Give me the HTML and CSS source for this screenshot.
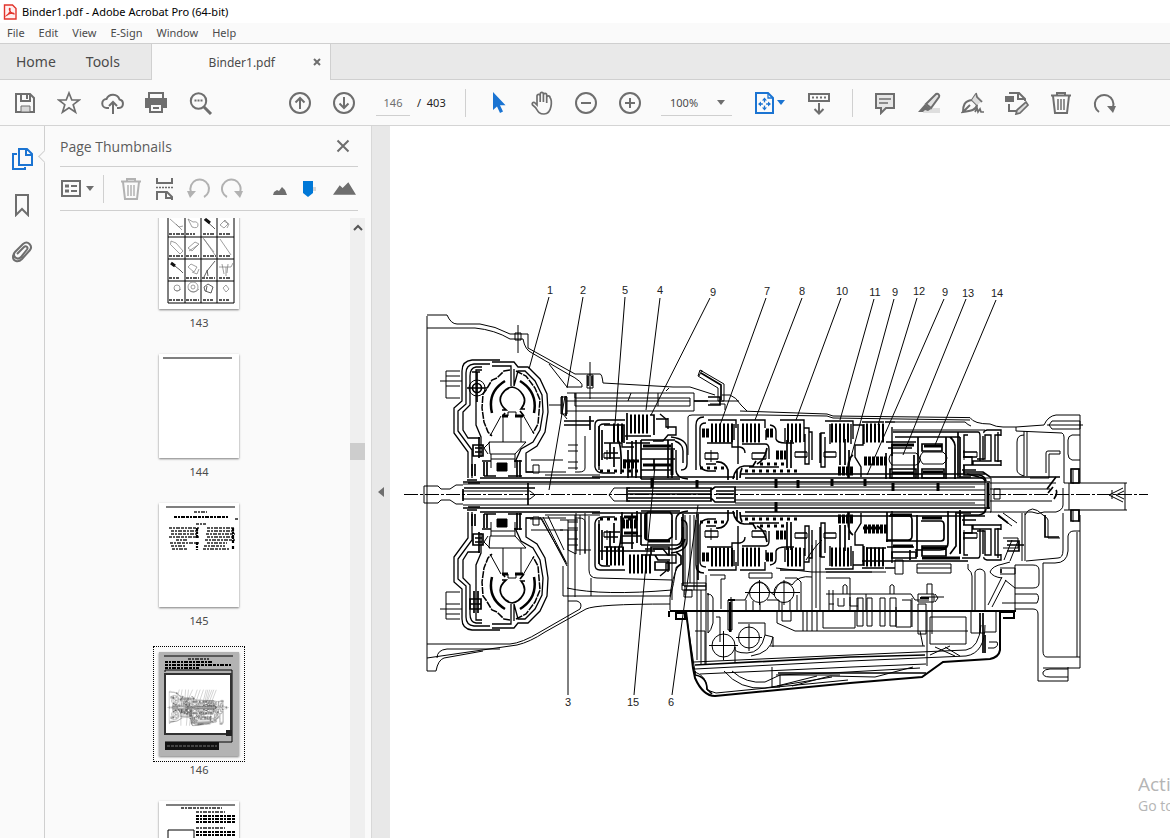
FILE: index.html
```html
<!DOCTYPE html>
<html lang="en">
<head>
    <meta charset="UTF-8">
    <meta name="viewport" content="width=device-width, initial-scale=1.0">
    <title>Binder1.pdf - Adobe Acrobat Pro (64-bit)</title>
    <link rel="stylesheet" href="styles.css">
</head>
<body>

<header class="title-bar">
    <svg class="app-icon" viewBox="0 0 14 16"><path d="M1.500 1h8l3.500 3.500V15H1.500z" fill="#fff0f0" stroke="#e2332b" stroke-width="1.400"/><path d="M3.500 11.500c2.500-1 4-4.500 3.500-7-.6-.6-.9.300-.5 1.500.5 2 2 3.500 4.500 4 .3-1-1.500-1-3.500-.6-1.500.3-3 .8-4 2.100z" fill="none" stroke="#e2332b" stroke-width="1.200"/></svg>
    <span>Binder1.pdf - Adobe Acrobat Pro (64-bit)</span>
</header>

<nav class="menu-bar">
    <a href="#">File</a>
    <a href="#">Edit</a>
    <a href="#">View</a>
    <a href="#">E-Sign</a>
    <a href="#">Window</a>
    <a href="#">Help</a>
</nav>

<div class="tab-bar">
    <div class="fixed-tabs">
        <a href="#">Home</a>
        <a href="#">Tools</a>
    </div>
    <div class="doc-tab">
        <span>Binder1.pdf</span>
        <button type="button" class="tab-close" aria-label="Close tab"><svg viewBox="0 0 8 8"><path d="M1 1l6 6M7 1L1 7" stroke-width="2"/></svg></button>
    </div>
</div>

<!-- Main toolbar -->
<div class="toolbar">
    <button type="button" class="tool" aria-label="Save"><svg viewBox="0 0 24 24"><path d="M3 3h14l4 4v14H3zM8 3v7h9V4M14 4v4" /><path d="M8 15h9v6H8z" fill="#d8d8d8" stroke-width="1"/></svg></button>
    <button type="button" class="tool" aria-label="Star"><svg viewBox="0 0 24 24"><path d="M12 2l2.800 7h7.400l-6 4.700 2.300 7.500L12 16.800l-6.500 4.400 2.300-7.500-6-4.700h7.400z" stroke-width="1.700"/></svg></button>
    <button type="button" class="tool" aria-label="Upload"><svg viewBox="0 0 24 24"><path d="M8 17H6a4.500 4.500 0 0 1-.5-9A7 7 0 0 1 18.500 8.500 4.300 4.300 0 0 1 18 17h-2"/><path d="M12 23V11M8 15l4-4 4 4"/></svg></button>
    <button type="button" class="tool" aria-label="Print"><svg viewBox="0 0 24 24"><path d="M4 2h14v6H4z"/><path d="M0 7h22v10H0z" class="solid" stroke="none"/><path d="M5 13h12v8H5z" fill="#fafafa"/><path d="M8 16h6v2H8z" class="solid" stroke="none"/></svg></button>
    <button type="button" class="tool" aria-label="Find"><svg viewBox="0 0 24 24"><circle cx="9.500" cy="10" r="7.700"/><path d="M15 16l7 7" stroke-width="3"/><path d="M5.500 9.500h8" stroke-dasharray="2 1"/></svg></button>

    <button type="button" class="tool page-up" aria-label="Previous page"><svg viewBox="0 0 24 24"><circle cx="12" cy="12" r="10"/><path d="M12 18V7M7.500 11.500L12 7l4.500 4.500"/></svg></button>
    <button type="button" class="tool" aria-label="Next page"><svg viewBox="0 0 24 24"><circle cx="12" cy="12" r="10"/><path d="M12 6v11M7.500 12.500L12 17l4.500-4.500"/></svg></button>
    <input class="page-input" type="text" value="146" aria-label="Page number">
    <span class="page-count">/&nbsp; 403</span>
    <span class="separator"></span>

    <button type="button" class="tool blue" aria-label="Select"><svg viewBox="0 0 24 24"><path d="M7 1v18l4-3.500 3 6.500 3-1.500-3-6.300h5.500z" class="solid" stroke="none"/></svg></button>
    <button type="button" class="tool" aria-label="Hand"><svg viewBox="0 0 24 24"><path d="M7 14V5a1.600 1.600 0 0 1 3.200 0v6V3a1.600 1.600 0 0 1 3.200 0v8-7a1.600 1.600 0 0 1 3.300 0v8-5.500a1.600 1.600 0 0 1 3.300 0C22 9 22.500 23 14 23c-5 0-6-2.500-8.500-6.500L2.500 14c-1-2 .5-3 2-2.500z" stroke-width="1.700"/></svg></button>
    <button type="button" class="tool" aria-label="Zoom out"><svg viewBox="0 0 24 24"><circle cx="12" cy="12" r="10"/><path d="M7 12h10"/></svg></button>
    <button type="button" class="tool" aria-label="Zoom in"><svg viewBox="0 0 24 24"><circle cx="12" cy="12" r="10"/><path d="M7 12h10M12 7v10"/></svg></button>
    <div class="zoom-box">
        <select aria-label="Zoom level"><option>100%</option></select>
        <svg class="caret" viewBox="0 0 8 5"><path d="M0 0h8L4 5z"/></svg>
    </div>

    <button type="button" class="tool fit blue" aria-label="Fit page"><svg viewBox="0 0 24 24"><path d="M2 2h12l5 5v15H2z"/><path d="M14 2v5h5M10.500 8v10M5.500 13h10" stroke-width="1.300"/><path d="M8 9.500l2.500-3 2.500 3zM8 16.500l2.500 3 2.500-3zM7 10.500l-3 2.500 3 2.500zM14 10.500l3 2.500-3 2.500z" class="solid" stroke="none"/><circle cx="10.500" cy="13" r="1.800" fill="#fafafa" stroke="none"/></svg><svg class="caret" viewBox="0 0 8 5"><path d="M0 0h8L4 5z"/></svg></button>
    <button type="button" class="tool" aria-label="Scrolling mode"><svg viewBox="0 0 24 24"><path d="M2 3h20v7H2z"/><path d="M5 6.500h14" stroke-dasharray="2 2"/><path d="M12 12v10M7.500 18l4.500 4.500 4.500-4.500"/></svg></button>
    <span class="separator"></span>

    <button type="button" class="tool" aria-label="Comment"><svg viewBox="0 0 24 24"><path d="M3 3h18v14h-8l-5 5v-5H3z" fill="#e6e6e6"/><path d="M6 8h12M6 12h9" stroke-width="1.300"/></svg></button>
    <button type="button" class="tool" aria-label="Highlight"><svg viewBox="0 0 24 24"><path d="M7 17h16v5H6z" fill="#dedede" stroke="none"/><path d="M19 3c2-1 4 1 3 3L14 17l-5-4z" fill="#e2e2e2"/><path d="M8 13l6 5-3 2-3-1-2 2H1z" class="solid" stroke="none"/></svg></button>
    <button type="button" class="tool" aria-label="Sign"><svg viewBox="0 0 24 24"><path d="M2 21c0-6 1-11 9-12l5 5c-1 5-6 6-14 7l7-7M11 9l4-6"/><path d="M15 3l7 7-6 4-5-5z" fill="#ddd" stroke="none"/><path d="M15 2l1 4 5 5M14 21l2-4 1 4 2-3 1 3h3" stroke-width="1.700"/></svg></button>
    <button type="button" class="tool" aria-label="Edit PDF"><svg viewBox="0 0 24 24"><path d="M4 2h10l6 6v2M13 2v6h6M4 13v7h7"/><path d="M0 5h9v6H0z" class="solid" stroke="none"/><path d="M11 23l1-4 9-8 2 3-8 8z" fill="#ddd" stroke-width="1.700"/></svg></button>
    <button type="button" class="tool" aria-label="Delete"><svg viewBox="0 0 24 24"><path d="M4 5l2 17h12l2-17M2 4.500h20M8 4V2h8v2"/><path d="M9 8v11M12 8v11M15 8v11" stroke-width="1.500"/></svg></button>
    <button type="button" class="tool" aria-label="Rotate"><svg viewBox="0 0 24 24"><path d="M6 21a9.300 9.300 0 1 1 14-5"/><path d="M14 15h9l-3 7z" class="solid" stroke="none"/></svg></button>
</div>

<main class="workspace">
    <nav class="rail">
        <button type="button" class="blue" aria-label="Page thumbnails"><svg viewBox="0 0 24 24"><path d="M9 2h8l5 5v11H9zM16 2v6h6M7 7H3v15h12v-2"/></svg></button>
        <button type="button" aria-label="Bookmarks"><svg viewBox="0 0 24 24"><path d="M6 2h12v20l-6-6-6 6z"/></svg></button>
        <button type="button" aria-label="Attachments"><svg viewBox="0 0 24 24"><path d="M7 15l7-7c2-2 4.500.5 3 2.500L11 18c-4 4-9-1-6-5l8-8c5-4 10 2 7 6l-8 9c-4 4-9 2-9-2 0-2 1-4 2-5"/></svg></button>
        <span class="rail-notch"></span>
    </nav>

    <aside class="panel">
        <div class="panel-head">
            <h2>Page Thumbnails</h2>
            <button type="button" aria-label="Close panel"><svg viewBox="0 0 14 14"><path d="M1.500 1.500l11 11M12.500 1.500l-11 11"/></svg></button>
        </div>
        <div class="panel-tools">
            <button type="button" class="options" aria-label="Options"><svg viewBox="0 0 24 24"><path d="M2 4h18v15H2z"/><path d="M5 9h4M5 14h4" stroke-width="3"/><path d="M11 9h6M11 14h6"/></svg><svg class="caret" viewBox="0 0 8 5"><path d="M0 0h8L4 5z"/></svg></button>
            <span class="separator"></span>
            <button type="button" class="pale" aria-label="Delete pages"><svg viewBox="0 0 24 24"><path d="M4 5l2 17h12l2-17M2 4.500h20M8 4V2h8v2"/><path d="M9 8v11M12 8v11M15 8v11" stroke-width="1.500"/></svg></button>
            <button type="button" aria-label="Insert pages"><svg viewBox="0 0 24 24"><path d="M4 1v5h15V1M4 23v-8h10l5 5v3M13 15v6h6"/><path d="M3 10.500h17" stroke-dasharray="2 1" stroke-width="1.500"/></svg></button>
            <button type="button" class="pale" aria-label="Rotate left"><svg viewBox="0 0 24 24"><path d="M17 20a9.300 9.300 0 1 0-13-5"/><path d="M9 14H0l3 7z" class="solid" stroke="none"/></svg></button>
            <button type="button" class="pale" aria-label="Rotate right"><svg viewBox="0 0 24 24"><path d="M6 20a9.300 9.300 0 1 1 13-5"/><path d="M13 14h9l-3 7z" class="solid" stroke="none"/></svg></button>
            <div class="size-slider">
                <svg class="hill-small" viewBox="0 0 14 8"><path d="M0 8l1-3 3-2 2 1 3-4 3 3 2 5z"/></svg>
                <svg class="slider-knob" viewBox="0 0 14 16"><path d="M9 6h4v4H9z" fill="#d6d6d6"/><path d="M0 0h10v12l-5 4-5-4z" fill="#0078d7"/></svg>
                <svg class="hill-large" viewBox="0 0 24 13"><path d="M0 13L7 3l3 3 6-6 8 13z"/></svg>
            </div>
        </div>
        <div class="panel-body">
            <ul class="thumbs">
                <li>
                    <svg class="page" viewBox="0 0 80 104">
                        <path d="M9 10H75V98H9zM26 10V98M42 10V98M58 10V98M9 32H75M9 54H75M9 76H75" class="ink"/>
                        <path d="M10 29H25M27 29H36M44 29H56M60 29H72M10 51H24M27 51H40M44 51H57M60 51H72M10 73H20M27 73H40M43 73H56M60 73H72M10 95H24M27 95H40M44 95H54M60 95H70" class="tiny-text"/>
                        <path d="M11 14l9 8 4-1M17 19l6 6M29 14l4 8q6 2 6-2t-5-3zM12 36q-2 4 2 6l7 7 3-3-7-8-5-2M29 43l7-6 4 2-7 7zM30 46l9-6M45 34l11 16M44 33l11 14M61 34l11 16M29 62l6 5 3-5-6-3zM33 67l5 2 2-5M60 62h12l2-4M63 59l2 10M67 62v9M69 59l-1 9M61 20l5-5 3 4-4 4zM65 16l5 3-2 4M64 83l3-3 3 4-3 3z" class="sketch"/>
                        <circle cx="18" cy="83" r="3" class="sketch"/><path d="M15 84q3 4 7 0M29 84q6 6 11 0" class="sketch"/><circle cx="34" cy="82" r="5" class="sketch"/><circle cx="34" cy="82" r="2" class="sketch"/>
                        <path d="M45 72l3-6 8-10M49 71l-1-6M45 82l4-3 5 3-2 6-6-2zM48 81l-1 5M45 14l9 8 2 2M12 58l9 7 3 3" class="sketch-dark"/>
                        <path d="M46 14l5 4M12 58l4 3" class="dash-bold"/>
                    </svg>
                    <span>143</span>
                </li>
                <li>
                    <svg class="page" viewBox="0 0 80 104"><path d="M4 4H73" class="rule"/></svg>
                    <span>144</span>
                </li>
                <li>
                    <svg class="page" viewBox="0 0 80 104">
                        <path d="M7 4H76" class="rule"/>
                        <path d="M35 9H48M37 21H47M76 16H79" class="tiny-text"/><path d="M15 14H70" class="tiny-text heavy"/>
                        <path d="M10 25H40M12 28H40M12 31H38M10 34H40M17 37H28M11 40H40M12 43H26M13 46H28M48 25H76M48 28H76M47 31H76M48 34H74M46 37H76M48 40H68M45 43H66M44 46H70" class="tiny-text"/>
                        <path d="M38 25V35M38 39V47M74 25V40M74 43V47" class="tiny-text heavy"/>
                    </svg>
                    <span>145</span>
                </li>
                <li class="selected">
                    <svg class="page" viewBox="0 0 80 104">
                        <path d="M0 0H80V104H0z" fill="#b3b3b3"/>
                        <path d="M5 4H74M6 18V20M6 18H73V90H6" class="ink"/>
                        <path d="M29 7H50" class="tiny-text"/><path d="M6 10H54M6 13H73M6 16H40" class="tiny-text heavy"/>
                        <path d="M6 22H72V82H6z" fill="#fff" stroke="#333" stroke-width="2"/>
                        <path d="M67 78h6v6h-6z" fill="#222"/>
                        <svg x="8" y="36" width="62" height="40" viewBox="400 280 750 440" preserveAspectRatio="none"><use href="#cutaway" stroke-width="2"/></svg>
                        <path d="M6 90H60V98H6z" fill="#111"/><path d="M8 94H58" stroke="#777" stroke-dasharray="3 1"/>
                    </svg>
                    <span>146</span>
                </li>
                <li>
                    <svg class="page" viewBox="0 0 80 104">
                        <path d="M7 4H76" class="rule"/>
                        <path d="M22 7H63M37 11H66M37 27H66" class="tiny-text"/>
                        <path d="M37 15H76M37 18H76M37 21H76M37 31H76M37 34H76" class="tiny-text heavy"/>
                        <path d="M9 29H35V60H9z" class="ink"/>
                    </svg>
                </li>
            </ul>
            <div class="scrollbar">
                <svg class="scroll-up" viewBox="0 0 10 7"><path d="M1 6l4-4 4 4"/></svg>
                <span class="scroll-thumb"></span>
            </div>
        </div>
    </aside>

    <button type="button" class="splitter" aria-label="Collapse panel"><svg viewBox="0 0 6 10"><path d="M6 0v10L0 5z"/></svg></button>

    <!-- Document page with the cutaway drawing -->
    <section class="document">
        <svg class="drawing" viewBox="390 126 780 712">
            <g id="cutaway" class="lines">
                <!-- bell housing -->
                <path d="M427 316V671H436Q438 660 444 658L483 651M427 644H510Q522 643 540 632L580 609Q583 603 577 601H568M427 658L517 645Q530 642 545 632L586 609Q596 604 670 604M437 658Q437 650 447 649H500"/>
                <path d="M427 315H447Q451 324 457 324H480Q495 326 510 334H528V348L575 374H600Q602 374 603 383L673 387H690L715 395M427 328H475Q495 330 510 339H523Q525 350 532 353L568 374Q584 382 582 387H567L549 364M515 333v7h6v-7zM518 325v28" />
                <path d="M567 393H694V411H567M575 393V398H690V406H575zM576 393V470M561 397h6v17h-6zM563 414l4 5M549 405h12M587 375h6v13h-6zM590 362v37M631 393l-3 8M658 393v13M666 391l3-3M567 401H690" />
                <path d="M562 396v18M566 396v20M564 421h30M564 425h26M590 416v14M588 376v10M592 376v10" class="bold"/>
                <path d="M700 370l24 14v17h-6V388l-20-12zM699 376l3-6M694 401h45M722 395h8q6 2 11 10l6 6M710 404h15v6"/>
                <path d="M701 373l20 12v15M694 401h14" class="bold"/><path d="M708 397h12v8h-12" class="bold"/>
                <!-- top of the case -->
                <path d="M688 455V417Q688 415 692 415H760L827 416 833 418 970 420M740 411L827 414 833 416 970 417.600Q974 424 990 424Q996 427 1003 427H1016L1044 425Q1048 416 1056 415H1080V483M893 430H985M895 422H965q3 3 6 4" />
                <path d="M1052 421h28v8h-28l-3-4zM1047 425h36M1080 435h-8q-4 1-4 5v14q0 5 4 6h8M1016 427v4l46 2q2 1 2 4v46M1024 431v45M1027 431v45M1024 435q-7 0-7 7v28q0 4 7 6M1046 473V453q0-2 2-2h12v3h-11v24h-19M1071 469h9M1073 470v14"/>
                <path d="M967 474l12 3q5 1 6 4M963 472h20l7 5h70" class="bold"/>

                <!-- torque converter, upper half -->
                <g id="converter">
                    <path d="M500 360H472Q462 361 462 371V401L454 408V433L468 452V478M490 364H474Q466 365 466 373V404L458 411V431L472 450V478M482 367H476Q470 368 470 376V405L463 412V430L468 438H480M482 370h-6v30M476 400v25l5 12v20" stroke-width="1.300"/>
                    <path d="M492 362H514L518 367H528L540 379 547 394 548 412 545 432 537 446 526 453V472H533M492 366H511V386M514 369V386L518 371H525L535 381 542 395 543 412 540 430 533 442 521 449 515 462" stroke-width="1.300"/>
                    <path d="M510 370l-6 1-7 7-5 2-6 10-3 4-1 14 2 14 4 10 4 4M516 371l10 5 9 12 5 12-2 24-5 9" stroke-dasharray="7 1" stroke-width="1.500"/>
                    <path d="M505 381Q487 392 492 413M520 381Q538 392 534 413" stroke-width="2.500"/>
                    <path d="M502 410h4q-9-8-4-16 4-6 10-7 7 1 11 8 4 7-2 14h4M505 413l-2 3M520 411l4 5" stroke-width="1.700"/>
                    <path d="M508 416v-4h8v4M503 416V442M521 416V442M501 416L490 436M523 415L534 434M489 442H526L515 454H490zM491 454V468M515 454V468M491 459H515M488 454l-4-6 6-6"/>
                    <path d="M497 463h10v8h-10z" class="fill"/>
                    <path d="M484 462v14M487 462v14M517 460v17M520 460v17M472 464v12M475 464v12M482 461h9M514 461h8M484 476h12M508 476h14" class="bold"/>
                    <path d="M502 416h6M515 416h8" class="heavy"/>
                    <path d="M473 445h10v11h-10zM479 437v21M475 448h7M475 452h7" class="bold"/>
                    <path d="M460 371H446V398H460M446 376H460M446 386H460M440 381H462"/>
                    <path d="M531 460H563M531 473H531zM533 465h6v8h-6z M526 472h40M545 475h55" />
                    <path d="M480 478H600M468 483H480M467 480h10" class="bold"/>
                </g>
                <use href="#converter" transform="matrix(1 0 0 -1 0 990)"/>
                <circle cx="477" cy="388" r="8"/><circle cx="477" cy="388" r="4.500" class="bold"/><path d="M467 388h20M477 372v30M472 372h8M477 384v8" class="bold"/>
                <path d="M474 591v22M478 591v22M470 599h11v10h-11zM470 604h11" class="bold"/>

                <!-- clutch packs, upper half -->
                <g id="clutches">
                    <path d="M711 433h22M742 433h20M787 433h15M831 433h20M866 433h20" class="plates"/>
                    <path d="M595 467V425Q595 420 600 420H625M599 470V428Q599 424 604 424H610M595 467q1 6 8 6h12M604 443h18v4h12M660 414l6 5v8h10v8h-8l-5 6h-10M668 418v11" stroke-width="1.400"/>
                    <path d="M671 437q16 2 16 12v15q0 6-6 6M675 441q8 3 8 10v12M676 450v20q0 8 12 9" stroke-width="1.400"/>
                    <path d="M708 420H736V428M696 470V425q0-8 8-8M700 465V428q0-5 6-5M700 465q1 5 8 6h8M740 420H765V428M707 443h25v4h8q5 1 5 6M742 444h23q4 0 4 5v10M770 425q6 1 6 6v8q1 4 10 4h8M780 420h24v22M804 428h5v36h-4v-30M809 432h3v28M820 433v30M825 421h28v18M825 433h-4v34h4v-30M853 425h10v20h-8v12l6 10v10M862 422h22M892 427v52M885 422h10M734 424v16M738 424v40M766 430v10M785 428v14M830 424v20M851 424v20M864 424v20" stroke-width="1.400"/>
                    <path d="M705 453h13M705 459h13M752 453h14M752 459h14M795 452h12M795 457h12M824 452h12M824 457h12M963 452h14M963 457h14M604 453h14M604 458h16" class="bold"/>
                    <path d="M705 453v6M718 453v6M711 450v12M752 453v6M766 453v6M795 452v5M807 452v5M824 452v5M836 452v5M964 450v10M977 452v5M604 453v5M607 450v10"/>
                    <path d="M702 433h8M766 433h8M776 455h10M864 461h24M838 471h16" class="heavy dense"/>
                    <path d="M733 479q2-12 11-13h9l3-5M716 462q9-1 12 8v10M737 470v10M742 468q-2 4-2 10M706 464h10M749 467h30M787 440v28M791 440v28M767 448q-2 12-10 16" class="bold"/>
                    <path d="M962 432h16q2 0 2 4v25M968 435h-4v22h8v8h-9M984 433q-1-2 3-3h14v5h-6v26h6v4H973v-4h18v-26h-6v24h-8M998 432v30M983 436v24M1001 430v6M1001 460v6" stroke-width="1.400"/>
                    <path d="M960 437v40M964 465v10h15q6 1 7 6M962 470h14M957 477h14M840 439v26M845 439v26M853 455q-5 3-5 14v9M849 450v28" class="bold"/>
                    <path d="M585 436v32q0 4-6 4h-4M568 445h10M568 451h10M568 462h10M568 468h10" />
                    <path d="M592 477H735M740 474H985M745 478H985M641 479H680" class="bold"/><path d="M600 471H640M745 471H800M700 468H728M760 464H785" class="tiny-ticks"/>
                    <path d="M599 426v40M602 430v30M610 443v16M614 447v20M618 440q4 6 3 34M632 441v36" class="bold"/>
                </g>
                <use href="#clutches" transform="matrix(1 0 0 -1 0 990)"/>

                <!-- planetary gears, upper half -->
                <path d="M630 424h20M613 433h12" class="plates"/>
                <path d="M627 413V440M650 415h4v20M656 419h12M604 425h20v18M626 443h24M625 436h26" class="bold"/>
                <path d="M641 440h34M641 449h34M641 459h34M641 470h30M641 440v39M672 443v35M668 440v38M654 459v11M628 450v28M636 440v38" class="bold"/>
                <path d="M643 446h28M643 465h28M623 461h16M672 450v25" class="heavy"/>
                <path d="M623 464h14" class="heavy dense"/>
                <path d="M893 432H962M895 437H960M886 442H916M888 448H912M886 453v26M892 444v12M918 437v42M914 455v22M922 444h20v7h-20zM946 437v42M950 437q6 5 5 12v30M958 432v44M890 469h26v9h-26zM922 469h22v9h-22z" class="bold"/>
                <path d="M892 445h22M924 446h18M892 473h22M923 472h20" class="heavy"/>
                <path d="M892 453h24q4 3 4 7t-4 5h-24q-3-3-3-6t3-6zM923 452h20q4 3 4 6t-4 6h-20q-3-3-3-6t3-6z"/>

                <!-- planetary gears, lower half -->
                <path d="M629 564h22M606 556h18" class="plates"/>
                <path d="M637 511v32M641 513v32M648 512h22l2 3v22l-4 3h-20q-3 0-3-3v-22zM641 545h36q5-1 5-8v-20M645 549h28q9 0 12-10M651 547h18v8h-18zM622 536h20M600 551h55M641 555h14l3 5h12M655 562h14v8h-14zM676 552l5 4v8l-5 4M622 512v32" class="bold"/>
                <path d="M648 541h22M624 517h14M624 533h14M646 513v26" class="heavy"/>
                <path d="M622 524h15" class="heavy dense"/>
                <path d="M887 512v30M889 516h20q3 0 3 4v16q0 4-4 4h-22M917 515v42M921 521h20q3 0 3 4v13q0 3-3 3h-55M948 511v32q0 7-8 7h-25M956 512v34l-6 8M960 510v44M887 547h27M892 552h24v6h-24zM922 546h24v10h-24zM910 550v10M862 561h106M866 548h20" class="bold"/>
                <path d="M890 515h22M922 518h20M893 546h20M922 548h24M922 558h38M863 528h20" class="heavy"/>

                <!-- shafts -->
                <path d="M424 486h14l3 3h9l6-4h7M424 503h14l3-3h9l6 4h7M424 486v17" />
                <path d="M463 484H985M463 505H985M463 491H530l5 4-5 4H463zM609 495l5-7h16M609 495l5 6h16M735 490H985M735 500H985M735 487H975M735 503H975M985 478h6v34h-6zM994 489h6v10h-6z"/>
                <path d="M464 488H535M528 483v22M463 482H990M463 508H990M627 488h84v13h-84zM711 490l4-3h20v15h-20l-4-4zM463 489v12" class="bold"/>
                <path d="M628 491H711M628 494H711M628 498H711M716 491h18M716 494h18M716 498h18" class="bold"/>
                <path d="M697 480v8M776 479v9M832 479v7M865 479v7M893 483v8M938 483v8M776 502v10M798 480v8M652 478v10M988 483v26" stroke-width="3"/>
                <path d="M404 494.500H1148" stroke-dasharray="14 2 3 2"/>
                <path d="M990 483h66M990 512h42q6 3 12 0h12q7-2 7-7v-17M990 489h60M990 501h62M1064 483H1127M1064 510H1127M1069 483v27M1125 483v27M1123 488l-14 7 14 7M1124 491l-8 4 8 4M1112 490v9M1073 510v12M1079 510v12"/>
                <path d="M1071 469h8v14h-8zM1071 510h8v11h-8zM1048 493l5-6M1047 489l9-12M1056 490q2 3-2 9" class="bold"/>

                <!-- case below the shafts -->
                <path d="M530 519h12L567 566M543 517L566 562M548 516L564 550M540 517L567 564M568 520v30l8 4V513M575 515v82M589 516v54q0 8 8 8l75 2M576 530v20h15M567 588q35 8 105 2M591 578v18M563 566v30h107M560 520h18M560 530h18M580 515v40M585 513v40" />
                <path d="M672 520v80M685 515v80M690 515v68M694 515v75M682 583h24v7h-24zM684 590h8v7h-8zM670 596q2-18 8-30M676 568q-2 16-6 30v12"/>
                <path d="M683 514v72M698 514v66M684 586h22" class="bold"/>
                <path d="M710 575h15v4h-4v30M706 575v90M701 590v75M697 565v95M749 573h23v5h-23zM735 600h10l4-8q10-20 20-1l5 4q5-20 18-10 6-10 20-8M785 578h12l4 4v28M746 600v10M753 601v9M760 603v7M767 600h12v10M782 602v8M790 600v10M797 595v15M826 578h24v32M812 545v65M816 540v68M820 545v65M806 560q10-15 16-20M776 568l36 4h60M826 572h60"/>
                <circle cx="759.500" cy="592.500" r="10"/><circle cx="784" cy="592.500" r="10"/><circle cx="723.500" cy="645.500" r="11.500"/><circle cx="749" cy="637.500" r="10.500"/>
                <path d="M745 592.500h55M759.500 580v25M784 580v25M709 645.500h29M723.500 631v29M736 637.500h26M749 624v27M708 593v40q3-2 5-10v-25q-2-5-5-3zM716 617h4v25M728 600h4v30h-4zM731 597v35"/>
                <path d="M777 611v12l18 8h125l3 15M782 611v10h9v-10M823 611v17h32v-17M829 590v20M833 590v20M826 594h85l4 6h14M858 598v12M866 594v16M843 594v-8q2-3 4 0v8M890 594v-8q2-3 4 0v8M857 598h6v28h-6zM867 598h5v28h-5zM880 598h5v28h-5zM890 598h6v28h-6zM902 600h9v27h-15v-20M912 598v29M918 604h8v30h-8zM803 611v20M807 611v20M812 611v20M817 611v20"/>
                <path d="M829 604h5M838 598v8h6v-8M850 597v9h8M921 597h23M927 594v-10h5v50M918 594h16v8h-16zM935 594l3 4-3 4M930 617h36v27h-36zM920 631h48M927 611v55M695 631h10v33M738 623h27v12l8 2v10M765 635q-4 18-18 18t-12-6v16M773 637q-2 16-22 19M770 646h155M917 564h34v9h-34zM917 568h34M895 560h8v14h-8z"/>
                <path d="M670 611H1016M669 611v6M676 613h9v6h-9zM686 611L693 668 695 678Q703 696 715 696L850 683 922 677 943 662 990 659Q999 657 1000 650V612H1014V618H1003M920 598h9M728 600h7M730 602v30" class="outline"/>
                <path d="M686 613L695 672Q707 676 707 690L716 693 848 680M694 662L850 655 966 650Q979 648 981 625M695 669L850 661 966 656Q985 653 985 625M700 674L852 667 926 664M776 675L830 673 920 668M777 686l40-10M772 667v20h8v-12h60M724 671Q740 690 765 688L832 677M732 671Q746 684 765 682L780 675M792 686l38-10 45 1 38-10M930 655l20-9M935 647l20 9M945 647l15 9M971 611v22h13M996 612v20h-12M988 648h6q5-2 3-6h-8M975 633"/>
                <path d="M695 665L850 657 925 655M778 673H926M695 671v4q12 2 12 14l5 5" class="bold"/>
                <path d="M968 564v5q4 3 4 7v34M975 610v-38q1-3 5-3 5 1 5 5v36M990 572q2-6 13-8l7-2M990 572q3 5 12 6M1000 568h15v6h-15M1004 560l8-20M1010 561l8-20M988 605l14-28M992 607l14-27M1003 538h15v10h-15M998 516l14 10M1003 513l14 10M1022 513v48M1025 513v48M1015 565h18q6 0 6 5v13q0 5-6 5h-18M1015 588l-10-8M1015 565v46M1015 594h22q3 3 0 9h-35M1015 609h18q5 0 5 5v67H1068V667M1026 561l32-3q5 0 5-8V513M1025 515q6-12 18 0 5 3 5 5v18h12M1043 563h12q12 0 13-12v-15q1-5 6-5h6M1043 563v88q0 6 4 6h33V515M1077 532v125M1080 657v11H1043M1068 677H1050q-8 0-7-5 2-3 7-3h18" />
                <path d="M1045 515v22h14M1007 545h17M1007 541h12v10h-12M983 613v40M980 613v20M985 635v18M998 515l10 8M1001 569v4" class="bold"/>

                <!-- leader lines -->
                <path d="M549 297L529 369M583 297L567 388M565 396L549 490M625 297L615 424M660 298L646 410M710 298L651 415M766 298L720 425M802 298L755 420M841 298L796 420M874 299L840 420M894 299L848 468M917 298L878 425M944 299L867 475M966 299L903 455M996 300L935 445M568 530V695M655 465L634 695M698 505L672 695"/>
            </g>
            <g class="callouts">
                <text x="550" y="294">1</text><text x="583" y="294">2</text><text x="625" y="294">5</text><text x="660" y="294">4</text><text x="713" y="296">9</text><text x="767" y="295">7</text><text x="802" y="295">8</text><text x="842" y="295">10</text><text x="875" y="296">11</text><text x="895" y="296">9</text><text x="919" y="295">12</text><text x="945" y="296">9</text><text x="968" y="297">13</text><text x="997" y="297">14</text><text x="568" y="706">3</text><text x="633" y="706">15</text><text x="671" y="706">6</text>
            </g>
        </svg>
        <div class="watermark">
            <p class="watermark-title">Acti</p>
            <p>Go to</p>
        </div>
    </section>
</main>

</body>
</html>
```

FILE: styles.css
```css
* {
    box-sizing: border-box;
}

body {
    margin: 0;
    height: 100vh;
    display: flex;
    flex-direction: column;
    overflow: hidden;
    font-family: "Noto Sans", "Open Sans", sans-serif;
    font-size: 11px;
    color: #4b4b4b;
    background-color: #fafafa;
}

a {
    color: inherit;
    text-decoration: none;
}

button {
    display: flex;
    align-items: center;
    justify-content: center;
    padding: 0;
    border: 0;
    background: none;
    color: #6e6e6e;
    cursor: pointer;
}

button svg {
    width: 24px;
    height: 24px;
    flex: none;
    fill: none;
    stroke: currentColor;
    stroke-width: 2;
}

.solid {
    fill: currentColor;
}

.blue {
    color: #1b74d2;
}

.pale {
    color: #b2b2b2;
}

svg.caret {
    width: 8px;
    height: 5px;
    fill: currentColor;
    stroke: none;
}

.separator {
    width: 1px;
    height: 28px;
    background-color: #d0d0d0;
}

/* Title and menus */
.title-bar {
    flex: none;
    display: flex;
    align-items: center;
    gap: 5px;
    height: 23px;
    padding-left: 3px;
    color: #000;
    background-color: #fff;
}

.app-icon {
    width: 14px;
    height: 16px;
}

.menu-bar {
    flex: none;
    display: flex;
    align-items: center;
    gap: 14px;
    height: 20px;
    padding: 0 0 2px 7px;
}

/* Tabs */
.tab-bar {
    flex: none;
    display: flex;
    height: 37px;
    border-top: 1px solid #cfcfcf;
    background-color: #e9e9e9;
}

.fixed-tabs {
    display: flex;
    align-items: center;
    gap: 30px;
    width: 151px;
    padding-left: 16px;
    border-bottom: 1px solid #d0d0d0;
    font-size: 14px;
}

.doc-tab {
    display: flex;
    align-items: center;
    justify-content: flex-end;
    gap: 38px;
    width: 180px;
    padding-right: 9px;
    border-left: 1px solid #d0d0d0;
    border-right: 1px solid #d0d0d0;
    background-color: #fafafa;
    font-size: 12px;
}

.tab-bar::after {
    content: "";
    flex: 1;
    border-bottom: 1px solid #d0d0d0;
}

.tab-close svg {
    width: 8px;
    height: 8px;
}

/* Toolbar */
.toolbar {
    flex: none;
    display: flex;
    align-items: center;
    height: 46px;
    padding-left: 3px;
    border-bottom: 1px solid #d4d4d4;
}

.tool {
    width: 44px;
    height: 40px;
    flex: none;
}

.page-up {
    margin-left: 55px;
}

.page-input {
    width: 34px;
    height: 27px;
    margin-left: 10px;
    padding: 0;
    border: 0;
    border-bottom: 1px solid #cfcfcf;
    background: none;
    font: inherit;
    color: #6e6e6e;
    text-align: center;
}

.page-count {
    width: 44px;
    padding-left: 7px;
    white-space: nowrap;
    color: #222;
}

.toolbar .separator {
    margin: 0 10px 0 11px;
}

.zoom-box {
    display: flex;
    align-items: center;
    width: 71px;
    height: 27px;
    margin: 0 12px 0 9px;
    padding: 0 7px 0 9px;
    border-bottom: 1px solid #cfcfcf;
    color: #6e6e6e;
}

.zoom-box select {
    flex: 1;
    min-width: 0;
    padding: 0;
    border: 0;
    appearance: none;
    background: none;
    font: inherit;
    color: #4b4b4b;
}

.fit {
    position: relative;
    margin-right: 9px;
}

.fit .caret {
    position: absolute;
    right: 3px;
}

/* Work area */
.workspace {
    flex: 1;
    display: flex;
    min-height: 0;
}

.rail {
    position: relative;
    flex: none;
    display: flex;
    flex-direction: column;
    align-items: center;
    gap: 22px;
    width: 45px;
    padding-top: 21px;
    border-right: 1px solid #cfcfcf;
}

.rail-notch {
    position: absolute;
    top: 26px;
    right: -5px;
    width: 9px;
    height: 9px;
    border-left: 1px solid #cfcfcf;
    border-bottom: 1px solid #cfcfcf;
    background-color: #fafafa;
    transform: rotate(45deg);
}

.panel {
    flex: none;
    display: flex;
    flex-direction: column;
    width: 327px;
    padding: 0 6px 0 15px;
    border-right: 1px solid #d8d8d8;
}

.panel-head {
    display: flex;
    align-items: center;
    justify-content: space-between;
    height: 41px;
    margin-right: 7px;
    padding-right: 8px;
    border-bottom: 1px solid #cfcfcf;
}

.panel-head h2 {
    margin: 0;
    font-family: "Open Sans", sans-serif;
    font-size: 14px;
    font-weight: normal;
    color: #5c5c5c;
}

.panel-head svg {
    width: 14px;
    height: 14px;
}

.panel-tools {
    display: flex;
    align-items: center;
    height: 44px;
    margin-right: 7px;
    border-bottom: 1px solid #cfcfcf;
}

.panel-tools button {
    width: 34px;
}

.panel-tools .options {
    justify-content: space-between;
    margin-right: 9px;
}

.panel-tools .separator {
    margin-right: 10px;
}

.size-slider {
    flex: 1;
    display: flex;
    align-items: center;
    justify-content: flex-end;
    gap: 16px;
    padding-right: 2px;
    fill: #6e6e6e;
}

.hill-small {
    width: 14px;
    height: 8px;
    margin-top: 5px;
}

.slider-knob {
    width: 14px;
    height: 16px;
}

.hill-large {
    width: 23px;
    height: 13px;
}

.panel-body {
    flex: 1;
    display: flex;
    min-height: 0;
    margin-top: 7px;
}

.thumbs {
    flex: 1;
    margin: 0;
    padding: 0 12px 0 0;
    overflow: hidden;
    list-style: none;
}

.thumbs li {
    display: flex;
    flex-direction: column;
    align-items: center;
    gap: 6px;
    height: 149px;
}

/* list is scrolled part-way through page 143 */
.thumbs li:first-child {
    margin-top: -13px;
}

.page {
    flex: none;
    width: 80px;
    height: 104px;
    background-color: #fff;
    box-shadow: 0 1px 2px rgba(0, 0, 0, 0.5);
}

.selected .page {
    outline: 1px dotted #000;
    outline-offset: 5px;
}

.ink {
    fill: none;
    stroke: #000;
}

.rule {
    stroke: #555;
    stroke-width: 1.5;
}

.sketch {
    fill: none;
    stroke: #777;
    stroke-width: 0.7;
}

.sketch-dark {
    fill: none;
    stroke: #333;
    stroke-width: 0.8;
}

.dash-bold {
    stroke: #111;
    stroke-width: 3;
}

.tiny-text {
    fill: none;
    stroke: #222;
    stroke-width: 1.3;
    stroke-dasharray: 3 1 2 1 4 1;
}

.tiny-text.heavy {
    stroke: #000;
    stroke-width: 2.2;
}

.scrollbar {
    display: flex;
    flex-direction: column;
    align-items: center;
    width: 15px;
    background-color: #efefef;
}

.scroll-up {
    width: 10px;
    height: 7px;
    margin-top: 6px;
    fill: none;
    stroke: #555;
    stroke-width: 2;
}

.scroll-thumb {
    width: 15px;
    height: 17px;
    margin-top: 212px;
    background-color: #cdcdcd;
}

.splitter {
    flex: none;
    width: 18px;
    padding-top: 19px;
    background-color: #e8e8e8;
}

.splitter svg {
    width: 6px;
    height: 10px;
    fill: #6e6e6e;
    stroke: none;
}

.document {
    position: relative;
    flex: 1;
    min-width: 0;
    overflow: hidden;
    background-color: #fff;
}

.drawing {
    display: block;
    width: 780px;
    height: 712px;
}

.lines {
    fill: none;
    stroke: #000;
}

.bold {
    stroke-width: 1.7;
}

.outline {
    stroke-width: 2;
}

.heavy {
    stroke-width: 3;
}

.dense {
    stroke-width: 9;
    stroke-dasharray: 3 1;
}

.plates {
    stroke-width: 19;
    stroke-dasharray: 2 2;
}

.tiny-ticks {
    stroke-width: 3;
    stroke-dasharray: 3 4;
}

.fill {
    fill: #000;
}

.callouts {
    font-family: "Liberation Sans", Arial, sans-serif;
    font-size: 11px;
    text-anchor: middle;
    fill: #222;
}

.watermark {
    position: absolute;
    right: 0;
    bottom: 22px;
    width: 32px;
    overflow: hidden;
    white-space: nowrap;
    font-family: "Open Sans", sans-serif;
    font-size: 14px;
    line-height: 20px;
    color: #b5b5b5;
}

.watermark p {
    margin: 0;
}

.watermark .watermark-title {
    font-size: 19px;
    line-height: 24px;
}
```
